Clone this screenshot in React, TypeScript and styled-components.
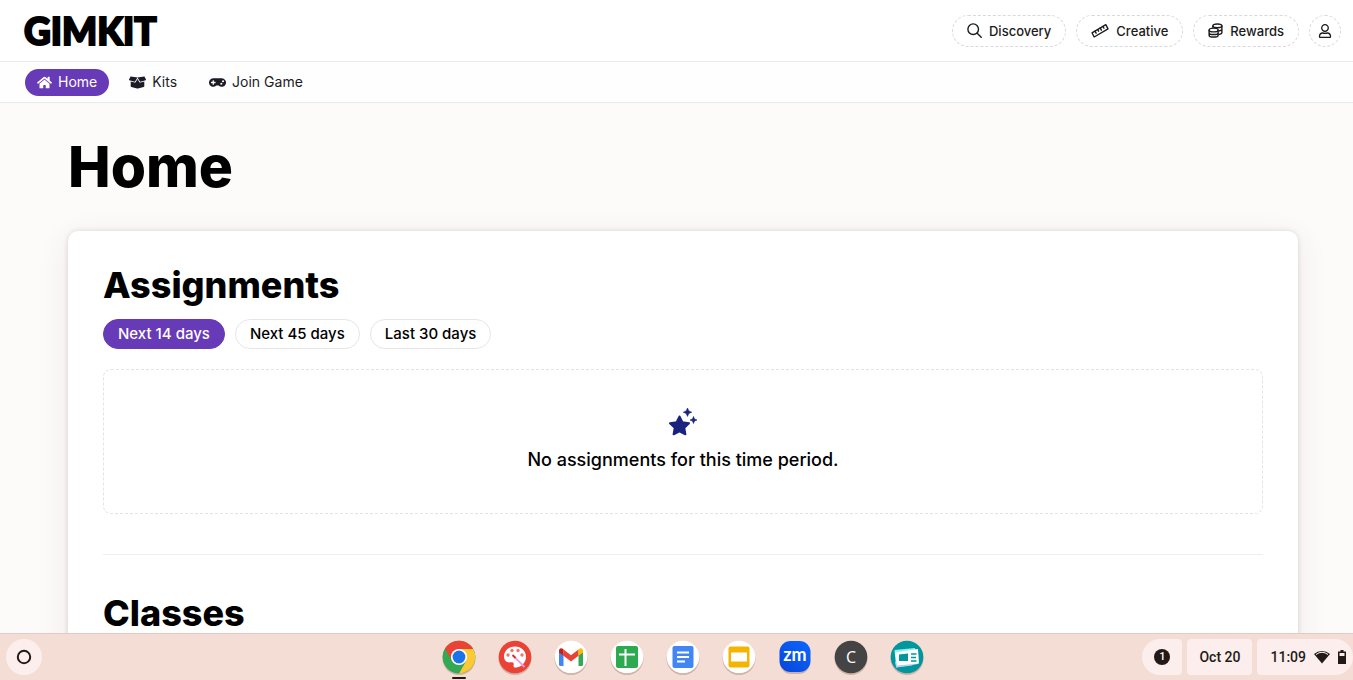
import React from 'react';
import styled, { createGlobalStyle } from 'styled-components';
import { FaHome, FaBoxOpen, FaGamepad, FaRegUser } from 'react-icons/fa';

const GlobalStyle = createGlobalStyle`
  *, *::before, *::after { box-sizing: border-box; }
  body { margin: 0; font-family: Inter, 'Liberation Sans', sans-serif; color: #000; background: #fcfbfa; }
  h1, h2, p { margin: 0; }
  button { font: inherit; color: inherit; cursor: pointer; }
  a { color: inherit; text-decoration: none; }
`;

const Screen = styled.div`
  height: 100vh;
  display: flex;
  flex-direction: column;
`;

const Page = styled.div`
  flex: 1;
  min-height: 0;
  overflow-y: auto;
  scrollbar-width: none;
`;

const Header = styled.header`
  height: 62px;
  padding: 0 12px 0 24px;
  display: flex;
  align-items: center;
  justify-content: space-between;
  background: #fff;
  border-bottom: 1px solid #ebebee;
`;

const Logo = styled.a`
  font-family: Lato, sans-serif;
  font-weight: 900;
  font-size: 37px;
  line-height: 48px;
  -webkit-text-stroke: 2px #000;
`;

const HeaderActions = styled.div`
  display: flex;
  gap: 10px;
`;

const HeaderButton = styled.button<{ $round?: boolean }>`
  height: 32px;
  width: ${(p) => (p.$round ? '32px' : 'auto')};
  padding: ${(p) => (p.$round ? '0' : '0 14px')};
  display: flex;
  align-items: center;
  justify-content: center;
  gap: 7px;
  background: #fff;
  border: 1px dashed #d9d9d9;
  border-radius: 16px;
  font-size: 13px;
  font-weight: 500;
  color: #1b1b1b;
`;

const Nav = styled.nav`
  height: 41px;
  padding: 0 25px;
  display: flex;
  align-items: center;
  gap: 8px;
  background: #fefefe;
  border-bottom: 1px solid #ebebee;
`;

const NavLink = styled.a<{ $active?: boolean }>`
  height: 27px;
  padding: 0 12px;
  display: flex;
  align-items: center;
  gap: 6px;
  border-radius: 14px;
  font-size: 14px;
  line-height: 18px;
  color: ${(p) => (p.$active ? '#fff' : '#1c1b25')};
  background: ${(p) => (p.$active ? '#673ab7' : 'transparent')};
`;

const Main = styled.main`
  padding: 32px 55px 0 68px;
`;

const PageTitle = styled.h1`
  font-size: 57px;
  line-height: 64px;
  font-weight: 800;
`;

const Card = styled.section`
  margin-top: 32px;
  padding: 34px 35px 60px;
  background: #fff;
  border-radius: 10px;
  box-shadow: 0 0 5px rgba(60, 30, 30, 0.16), 0 8px 30px rgba(120, 60, 60, 0.1);
`;

const SectionTitle = styled.h2`
  font-size: 36px;
  line-height: 40px;
  font-weight: 800;
`;

const Filters = styled.div`
  display: flex;
  gap: 10px;
  margin: 14px 0 20px;
`;

const Filter = styled.button<{ $active?: boolean }>`
  height: 30px;
  padding: 0 14px 2px;
  border-radius: 15px;
  border: 1px solid ${(p) => (p.$active ? '#673ab7' : '#e6e6e6')};
  background: ${(p) => (p.$active ? '#673ab7' : '#fff')};
  color: ${(p) => (p.$active ? '#fff' : '#000')};
  font-size: 15px;
  font-weight: 500;
`;

const Empty = styled.div`
  height: 145px;
  display: flex;
  flex-direction: column;
  align-items: center;
  padding-top: 37px;
  gap: 8px;
  border: 1px dashed #e4e4e4;
  border-radius: 8px;
`;

const EmptyText = styled.p`
  font-size: 18px;
  line-height: 30px;
  font-weight: 500;
`;

const Divider = styled.hr`
  margin: 40px 0 38px;
  border: 0;
  border-top: 1px solid #efefef;
`;

const Shelf = styled.footer`
  height: 47px;
  flex: none;
  display: grid;
  grid-template-columns: 1fr auto 1fr;
  align-items: center;
  background: #f4ddd5;
  border-top: 1px solid #e2cbc5;
  font-family: Roboto, sans-serif;
  font-size: 14px;
  font-weight: 500;
  color: #231a18;
`;

const Launcher = styled.button`
  width: 36px;
  height: 36px;
  margin-left: 6px;
  padding: 0;
  display: grid;
  place-items: center;
  border: 0;
  border-radius: 50%;
  background: #fbeeec;
`;

const Apps = styled.div`
  display: flex;
  gap: 22px;
  margin: 2px 0 0 12px;
`;

const AppButton = styled.button<{ $running?: boolean }>`
  position: relative;
  padding: 0;
  border: 0;
  background: none;
  display: flex;

  &::after {
    content: '';
    display: ${(p) => (p.$running ? 'block' : 'none')};
    position: absolute;
    left: 10px;
    bottom: -3px;
    width: 14px;
    height: 2px;
    border-radius: 1px;
    background: #231a18;
  }
`;

const Tray = styled.div`
  display: flex;
  justify-content: flex-end;
  gap: 5px;
`;

const TrayButton = styled.button<{ $side?: 'start' | 'end' }>`
  height: 36px;
  padding: ${(p) => (p.$side === 'end' ? '0 7px 0 13px' : '0 12px')};
  display: flex;
  align-items: center;
  gap: 8px;
  border: 0;
  background: #fbeeec;
  border-radius: ${(p) =>
    p.$side === 'start' ? '18px 4px 4px 18px' : p.$side === 'end' ? '4px 18px 18px 4px' : '4px'};
`;

const Badge = styled.span`
  width: 16px;
  height: 16px;
  display: grid;
  place-items: center;
  border-radius: 50%;
  background: #231a18;
  color: #fff;
  font-size: 11px;
  line-height: 16px;
`;

const SearchIcon = () => (
  <svg width="15" height="15" viewBox="0 0 15 15" fill="none" stroke="currentColor" strokeWidth="1.4" strokeLinecap="round">
    <circle cx="6.2" cy="6.2" r="5.3" />
    <path d="m10.200 10.200 4 4" />
  </svg>
);

const RulerIcon = () => (
  <svg width="18" height="18" viewBox="0 0 18 18" fill="none" stroke="currentColor" strokeWidth="1.4" strokeLinejoin="round" strokeLinecap="round">
    <path d="M1 10.800 14.800 2.700 17 6.800 3.200 15Z" />
    <path d="M4 9.200l1.100 2M6.700 7.700l.9 1.500M9.300 6.200l1.100 2M12 4.600l.9 1.500" />
  </svg>
);

const CoinsIcon = () => (
  <svg width="15" height="15" viewBox="0 0 16 16" fill="none" stroke="currentColor" strokeWidth="1.5">
    <ellipse cx="10" cy="3" rx="4.800" ry="2" />
    <path d="M5.200 3v2M14.800 3v7.500c0 .9-1.400 1.600-3.400 1.900M14.800 6.700c0 .9-1.400 1.600-3.400 1.900" />
    <ellipse cx="6" cy="7.500" rx="4.800" ry="2" />
    <path d="M1.200 7.500V13c0 1.100 2.100 2 4.800 2s4.800-.9 4.800-2V7.500M1.200 10.300c0 1.100 2.100 2 4.800 2s4.800-.9 4.800-2" />
  </svg>
);

const StarsIcon = () => (
  <svg width="30" height="30" viewBox="0 0 30 30" fill="#1a237e" stroke="#1a237e" strokeLinejoin="round">
    <path strokeWidth="2" d="M11.500 9.500 14.400 15.300 21 16.300 16.300 20.900 17.400 27.300 11.500 24.300 5.600 27.300 6.700 20.900 2 16.300 8.600 15.300Z" />
    <path strokeWidth=".6" d="M19.500 1 20.800 3.900 23.700 5.200 20.800 6.500 19.500 9.400 18.200 6.500 15.300 5.200 18.200 3.900ZM25.500 9.500 26.500 12 29 13 26.500 14 25.500 16.500 24.500 14 22 13 24.500 12Z" />
  </svg>
);

const Disc = ({ fill, children }: { fill: string; children?: React.ReactNode }) => (
  <svg width="34" height="36" viewBox="0 0 34 36" aria-hidden="true">
    <circle cx="17" cy="18.500" r="16.500" fill="#7a4a40" opacity=".3" />
    <circle cx="17" cy="17" r="16.300" fill={fill} />
    {children}
  </svg>
);

const apps: { name: string; running?: boolean; icon: React.ReactNode }[] = [
  {
    name: 'Chrome',
    running: true,
    icon: (
      <Disc fill="#34a853">
        <path d="M17 17 2.900 8.800A16.300 16.300 0 0 1 31.100 8.900Z" fill="#ea4335" />
        <path d="M17 8.900H31.100A16.300 16.300 0 0 1 17 33.300L24 21Z" fill="#fbc934" />
        <path d="M3 8.800 10 21 17 17 17 8.900Z" fill="#ea4335" />
        <path d="M3 8.800 10 21 17 25 24 21 17 33.300A16.300 16.300 0 0 1 3 8.800Z" fill="#34a853" />
        <circle cx="17" cy="17" r="8.100" fill="#fff" />
        <circle cx="17" cy="17" r="6.400" fill="#1a73e8" />
      </Disc>
    ),
  },
  {
    name: 'Canvas',
    icon: (
      <Disc fill="#ea4335">
        <path d="M17 6.500C10.500 6.500 6 11 6 16.600c0 4.600 3.300 6.400 6.600 5.700 2.300-.4 3.600.6 3 2.600-.5 2 .6 2.900 2.300 2.700 5.700-.6 10.100-5.300 10.100-10.900C28 11 23.300 6.500 17 6.500Z" fill="#fff" />
        <g fill="#f0766d">
          <circle cx="10" cy="15" r="1.700" />
          <circle cx="14" cy="10.500" r="1.700" />
          <circle cx="20" cy="10.500" r="1.700" />
          <circle cx="24" cy="15" r="1.700" />
        </g>
        <path d="m16.500 17 10 10" stroke="#ee9be8" strokeWidth="1.800" />
        <path d="m14.500 15 3 3" stroke="#d93025" strokeWidth="2" />
      </Disc>
    ),
  },
  {
    name: 'Gmail',
    icon: (
      <Disc fill="#fff">
        <path d="M5 11v13.500q0 1.500 1.500 1.500h3V14Z" fill="#4285f4" />
        <path d="M29 11v13.500q0 1.500-1.500 1.500h-3V14Z" fill="#34a853" />
        <path d="M9.500 9.500 17 15.200 24.500 9.500V15.800L17 21.400 9.500 15.800Z" fill="#ea4335" />
        <path d="M5 11c0-3 2.500-3.500 4.500-1.500v6.300L5 12.500Z" fill="#c5221f" />
        <path d="M29 11c0-3-2.500-3.500-4.500-1.500v6.300L29 12.500Z" fill="#fbbc04" />
      </Disc>
    ),
  },
  {
    name: 'Sheets',
    icon: (
      <Disc fill="#fff">
        <rect x="6" y="6" width="22" height="22" rx="2" fill="#2da94f" />
        <path d="M15.500 9v17M9 14.500h16" stroke="#fff" strokeWidth="2" />
      </Disc>
    ),
  },
  {
    name: 'Docs',
    icon: (
      <Disc fill="#fff">
        <rect x="6.500" y="6" width="21" height="22" rx="2" fill="#4285f4" />
        <path d="M11 12.500h12M11 17h12M11 21.500h8" stroke="#fff" strokeWidth="2" />
      </Disc>
    ),
  },
  {
    name: 'Slides',
    icon: (
      <Disc fill="#fff">
        <rect x="6.500" y="6.500" width="21" height="21" rx="2" fill="#f4b400" />
        <rect x="9" y="12.500" width="16" height="9" fill="#fff" />
      </Disc>
    ),
  },
  {
    name: 'Zoom',
    icon: (
      <svg width="34" height="36" viewBox="0 0 34 36">
        <defs>
          <linearGradient id="zm" x1="0" y1="1" x2="1" y2="0">
            <stop stopColor="#0845d8" />
            <stop offset="1" stopColor="#0b67ff" />
          </linearGradient>
        </defs>
        <rect x="2" y="3" width="30" height="31" rx="11" fill="#7a4a40" opacity=".3" />
        <rect x="1.500" y="1" width="31" height="31" rx="11" fill="url(#zm)" />
        <text x="17" y="21" textAnchor="middle" fontFamily="Lato, sans-serif" fontWeight="700" fontSize="18" fill="#fff">zm</text>
      </svg>
    ),
  },
  {
    name: 'C',
    icon: (
      <Disc fill="#444">
        <text x="17" y="23" textAnchor="middle" fontFamily="Open Sans, sans-serif" fontSize="16" fill="#fff">C</text>
      </Disc>
    ),
  },
  {
    name: 'News',
    icon: (
      <Disc fill="#00969b">
        <path d="M4.500 10 25 8 28 24 6 27.500Z" fill="#8ff0ea" />
        <path d="M5 22 26 23 22 25.500 6.500 27.500Z" fill="#b9cdfb" />
        <path d="M5 12.500 28 9 29 23.500 7 25.500Z" fill="#fff" />
        <path d="M9 14.500 18 13.500V21H9Z" fill="#00969b" />
        <path d="M21 14h5.500M21 17.500h5M21 21h5.500" stroke="#00969b" strokeWidth="1.500" />
      </Disc>
    ),
  },
];

export default function App() {
  return (
    <Screen>
      <GlobalStyle />
      <Page>
        <Header>
          <Logo href="#">GIMKIT</Logo>
          <HeaderActions>
            <HeaderButton><SearchIcon />Discovery</HeaderButton>
            <HeaderButton><RulerIcon />Creative</HeaderButton>
            <HeaderButton><CoinsIcon />Rewards</HeaderButton>
            <HeaderButton $round aria-label="Account"><FaRegUser size={14} /></HeaderButton>
          </HeaderActions>
        </Header>
        <Nav>
          <NavLink href="#" $active><FaHome size={15} />Home</NavLink>
          <NavLink href="#"><FaBoxOpen size={17} />Kits</NavLink>
          <NavLink href="#"><FaGamepad size={17} />Join Game</NavLink>
        </Nav>
        <Main>
          <PageTitle>Home</PageTitle>
          <Card>
            <SectionTitle>Assignments</SectionTitle>
            <Filters>
              <Filter $active>Next 14 days</Filter>
              <Filter>Next 45 days</Filter>
              <Filter>Last 30 days</Filter>
            </Filters>
            <Empty>
              <StarsIcon />
              <EmptyText>No assignments for this time period.</EmptyText>
            </Empty>
            <Divider />
            <SectionTitle>Classes</SectionTitle>
          </Card>
        </Main>
      </Page>
      <Shelf>
        <Launcher aria-label="Launcher">
          <svg width="16" height="16" viewBox="0 0 16 16">
            <circle cx="8" cy="8" r="6.200" fill="none" stroke="#231a18" strokeWidth="2" />
          </svg>
        </Launcher>
        <Apps>
          {apps.map((a) => (
            <AppButton key={a.name} $running={a.running} aria-label={a.name}>{a.icon}</AppButton>
          ))}
        </Apps>
        <Tray>
          <TrayButton $side="start"><Badge>1</Badge></TrayButton>
          <TrayButton>Oct 20</TrayButton>
          <TrayButton $side="end">
            11:09
            <svg width="16" height="14" viewBox="0 0 16 14">
              <path d="M0 4a12 12 0 0 1 16 0L8 13.500Z" fill="#231a18" />
              <path d="M2 4.500a10 10 0 0 1 12 0" stroke="#fbeeec" fill="none" />
            </svg>
            <svg width="8" height="14" viewBox="0 0 8 14">
              <path d="M2.500 0h3v1.500H8V14H0V1.500h2.500Z" fill="#231a18" />
              <path d="M1.500 3h5v3h-5Z" fill="#fbeeec" />
            </svg>
          </TrayButton>
        </Tray>
      </Shelf>
    </Screen>
  );
}
